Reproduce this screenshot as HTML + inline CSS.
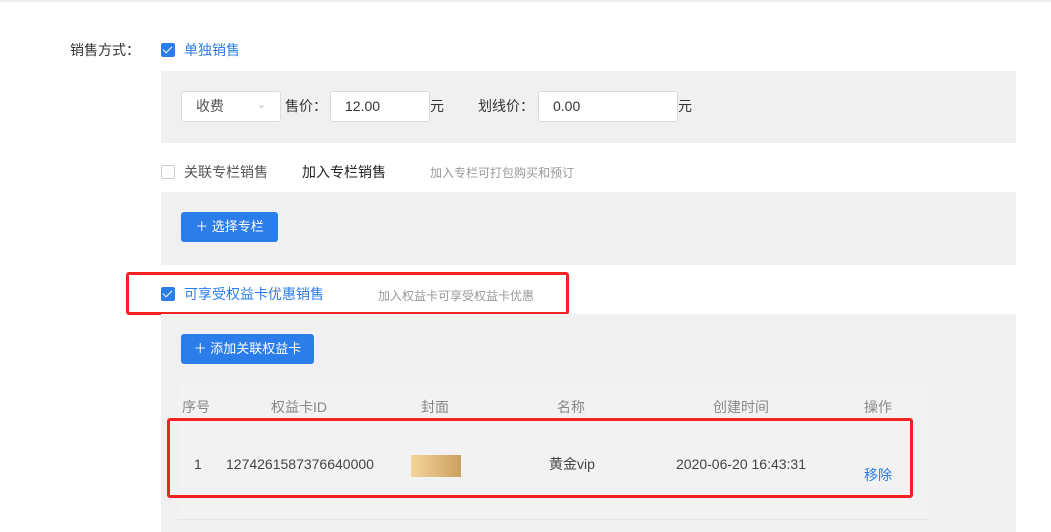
<!DOCTYPE html>
<html><head><meta charset="utf-8"><style>
*{margin:0;padding:0;box-sizing:border-box}
body{width:1051px;height:532px;background:#fff;font-family:"Liberation Sans","Noto Sans CJK SC",sans-serif;font-size:14px;color:#333;position:relative;overflow:hidden}
.a{position:absolute;white-space:nowrap;line-height:18px}
.panel{position:absolute;left:161px;width:855px;background:#f0f0f0}
.cb{position:absolute;width:14px;height:14px;border-radius:2px}
.cb.on{background:#2b7de9}
.cb.on:after{content:"";position:absolute;left:4px;top:1px;width:4px;height:8px;border:solid #fff;border-width:0 1.5px 1.5px 0;transform:rotate(45deg)}
.cb.off{border:1px solid #ccc;background:#fff}
.inp{position:absolute;height:31px;background:#fff;border:1px solid #dcdcdc;border-radius:3px;line-height:29px;padding-left:14px;color:#333}
.btn{position:absolute;background:#2b7de9;color:#fff;border-radius:3px;line-height:30px;height:30px;text-align:center;font-size:13px}
.red{position:absolute;border:3px solid #f52222;border-radius:3px}
.blue{color:#2b7de9}
.gray{color:#999;font-size:12px}
.cj{font-family:"Noto Sans CJK SC",sans-serif}
</style></head><body>
<div style="position:absolute;left:0;top:0;width:1051px;height:2px;background:#eee"></div>
<div class="a" style="left:70px;top:41px">销售方式<span class="cj">：</span></div>
<div class="cb on" style="left:161px;top:43px"></div>
<div class="a blue" style="left:184px;top:41px">单独销售</div>
<div class="panel" style="top:71px;height:72px"></div>
<div class="inp" style="left:181px;top:91px;width:100px;color:#555">收费<span style="position:absolute;left:75px;top:-1px;color:#bbb;font-size:11px">&#8964;</span></div>
<div class="a" style="left:285px;top:97px">售价<span class="cj">：</span></div>
<div class="inp" style="left:330px;top:91px;width:100px">12.00</div>
<div class="a" style="left:430px;top:97px">元</div>
<div class="a" style="left:478px;top:97px">划线价<span class="cj">：</span></div>
<div class="inp" style="left:538px;top:91px;width:140px">0.00</div>
<div class="a" style="left:678px;top:97px">元</div>
<div class="cb off" style="left:161px;top:165px"></div>
<div class="a" style="left:184px;top:163px;color:#555">关联专栏销售</div>
<div class="a" style="left:302px;top:163px;color:#222">加入专栏销售</div>
<div class="a gray" style="left:430px;top:164px">加入专栏可打包购买和预订</div>
<div class="panel" style="top:192px;height:73px"></div>
<div class="btn" style="left:181px;top:212px;width:97px">＋ 选择专栏</div>
<div class="red" style="left:126px;top:272px;width:443px;height:43px"></div>
<div class="cb on" style="left:161px;top:287px"></div>
<div class="a blue" style="left:184px;top:285px">可享受权益卡优惠销售</div>
<div class="a gray" style="left:378px;top:287px">加入权益卡可享受权益卡优惠</div>
<div class="panel" style="top:314px;height:218px"></div>
<div class="btn" style="left:181px;top:334px;width:133px">＋ 添加关联权益卡</div>
<div style="position:absolute;left:178px;top:383px;width:750px;height:137px;background:#f2f2f2;border-bottom:1px solid #e6e6e6"></div>
<div class="a" style="left:182px;top:398px;color:#888">序号</div>
<div class="a" style="left:271px;top:398px;color:#888">权益卡ID</div>
<div class="a" style="left:421px;top:398px;color:#888">封面</div>
<div class="a" style="left:557px;top:398px;color:#888">名称</div>
<div class="a" style="left:713px;top:398px;color:#888">创建时间</div>
<div class="a" style="left:864px;top:398px;color:#888">操作</div>
<div class="a" style="left:194px;top:455px;color:#444">1</div>
<div class="a" style="left:226px;top:455px;color:#444">1274261587376640000</div>
<div style="position:absolute;left:411px;top:455px;width:50px;height:22px;background:linear-gradient(90deg,#f6d49a,#caa060)"></div>
<div class="a" style="left:549px;top:455px;color:#444">黄金vip</div>
<div class="a" style="left:676px;top:455px;color:#444">2020-06-20 16:43:31</div>
<div class="a blue" style="left:864px;top:466px">移除</div>
<div class="red" style="left:167px;top:418px;width:746px;height:80px"></div>
</body></html>
